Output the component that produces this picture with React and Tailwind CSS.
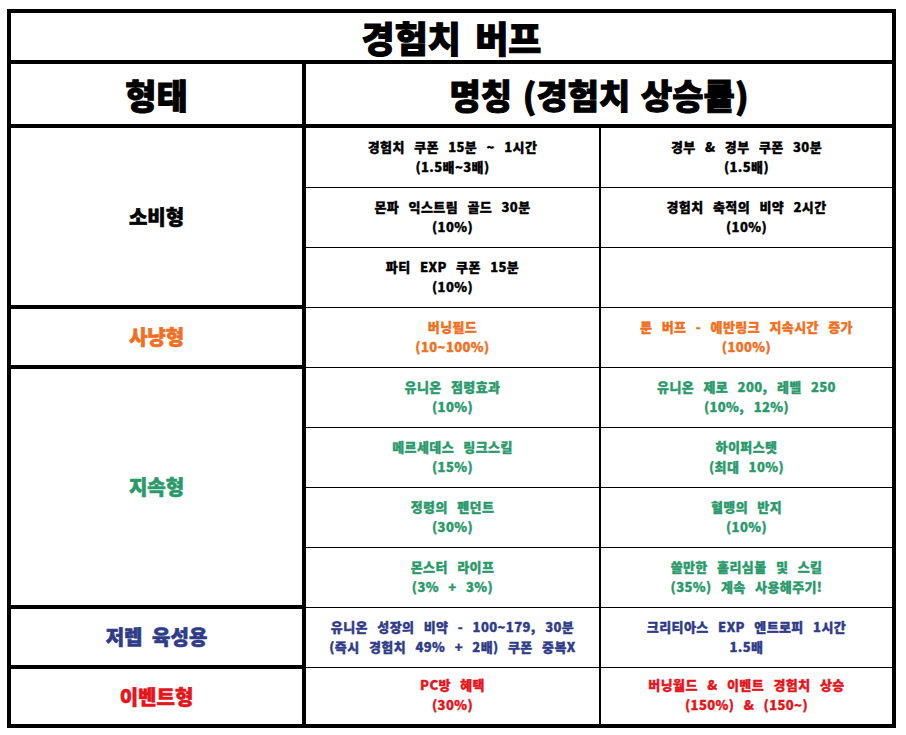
// 경험치 버프 정리표
const TONE = {
  black: 'text-black',
  orange: 'text-[#f26f21]',
  green: 'text-[#2b9a6b]',
  navy: 'text-[#2f3c88]',
  red: 'text-[#e6141b]',
}

const SECTIONS = [
  { label: '소비형', tone: 'black', h: 'h-[177px]' },
  { label: '사냥형', tone: 'orange', h: 'h-[56px]' },
  { label: '지속형', tone: 'green', h: 'h-[236px]' },
  { label: '저렙 육성용', tone: 'navy', h: 'h-[56px]' },
  { label: '이벤트형', tone: 'red', h: 'h-[55px]' },
]

const ROWS = [
  { tone: 'black', cells: [['경험치 쿠폰 15분 ~ 1시간', '(1.5배~3배)'], ['경부 & 경부 쿠폰 30분', '(1.5배)']] },
  { tone: 'black', cells: [['몬파 익스트림 골드 30분', '(10%)'], ['경험치 축적의 비약 2시간', '(10%)']] },
  { tone: 'black', cells: [['파티 EXP 쿠폰 15분', '(10%)'], null] },
  { tone: 'orange', cells: [['버닝필드', '(10~100%)'], ['룬 버프 - 에반링크 지속시간 증가', '(100%)']] },
  { tone: 'green', cells: [['유니온 점령효과', '(10%)'], ['유니온 제로 200, 레벨 250', '(10%, 12%)']] },
  { tone: 'green', cells: [['메르세데스 링크스킬', '(15%)'], ['하이퍼스텟', '(최대 10%)']] },
  { tone: 'green', cells: [['정령의 펜던트', '(30%)'], ['혈맹의 반지', '(10%)']] },
  { tone: 'green', cells: [['몬스터 라이프', '(3% + 3%)'], ['쓸만한 홀리심볼 및 스킬', '(35%) 계속 사용해주기!']] },
  { tone: 'navy', cells: [['유니온 성장의 비약 - 100~179, 30분', '(즉시 경험치 49% + 2배) 쿠폰 중복X'], ['크리티아스 EXP 엔트로피 1시간', '1.5배']] },
  { tone: 'red', cells: [['PC방 혜택', '(30%)'], ['버닝월드 & 이벤트 경험치 상승', '(150%) & (150~)']] },
]

function Cell({ lines, tone, className }) {
  return (
    <div className={`flex flex-col items-center justify-center pb-[2px] text-center text-[13px] leading-[20px] font-black tracking-[0.4px] [word-spacing:6px] [-webkit-text-stroke:0.35px_currentColor] whitespace-nowrap ${TONE[tone]} ${className}`}>
      {lines && lines.map((l, i) => <span key={i}>{l}</span>)}
    </div>
  )
}

export default function App() {
  return (
    <div className="min-h-[735px] w-[906px] bg-white pl-[7px] pt-[9px] font-['Noto_Sans_CJK_KR',sans-serif]">
      <div className="w-[889px] border-4 border-black">
        {/* 제목 */}
        <div className="flex h-[51px] items-center justify-center border-b-4 border-black text-[36px] font-black text-black [word-spacing:6px] [-webkit-text-stroke:1px_#000]">
          경험치 버프
        </div>

        {/* 헤더 */}
        <div className="flex h-[64px] border-b-4 border-black">
          <div className="flex w-[295px] items-center justify-center border-r-4 border-black text-[34px] font-black [-webkit-text-stroke:1px_#000]">
            형태
          </div>
          <div className="flex flex-1 items-center justify-center text-[34px] font-black [word-spacing:3px] [-webkit-text-stroke:1px_#000]">
            명칭 (경험치 상승률)
          </div>
        </div>

        {/* 본문 */}
        <div className="flex">
          <div className="flex w-[295px] flex-col border-r-4 border-black">
            {SECTIONS.map((s, i) => (
              <div
                key={s.label}
                className={`flex items-center justify-center text-[20px] font-black [word-spacing:5px] [-webkit-text-stroke:0.6px_currentColor] ${s.h} ${TONE[s.tone]} ${i < SECTIONS.length - 1 ? 'box-content border-b-4 border-black' : ''}`}
              >
                {s.label}
              </div>
            ))}
          </div>
          <div className="flex flex-1 flex-col">
            {ROWS.map((r, i) => (
              <div
                key={i}
                className={`flex ${i < ROWS.length - 1 ? 'h-[60px] border-b border-black' : 'h-[56px]'}`}
              >
                <Cell lines={r.cells[0]} tone={r.tone} className="w-[295px] border-r-2 border-black" />
                <Cell lines={r.cells[1]} tone={r.tone} className="flex-1" />
              </div>
            ))}
          </div>
        </div>
      </div>
    </div>
  )
}
